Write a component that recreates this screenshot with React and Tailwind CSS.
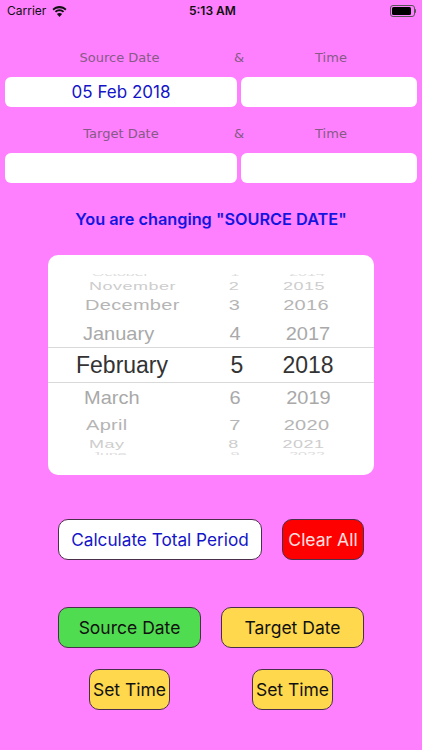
const rows = [
  { month: 'October', day: '1', year: '2014', h: 'h-[4px]', text: 'text-[#dcdcdc] text-[16px] scale-y-[0.4] -translate-y-[2px]', ml: 'ml-[44px]' },
  { month: 'November', day: '2', year: '2015', h: 'h-[17px]', text: 'text-[#cdcdcd] text-[18px] scale-y-[0.58] tracking-[0.5px]', ml: 'ml-[41px]', dayPad: 'pr-[2px]', yearPad: 'pr-[6px]' },
  { month: 'December', day: '3', year: '2016', h: 'h-[24px]', text: 'text-[#b5b5b5] text-[20px] scale-y-[0.74] tracking-[0.3px] -translate-y-[2px]', ml: 'ml-[37px]', dayPad: 'pr-[1px]', yearPad: 'pr-[2px]' },
  { month: 'January', day: '4', year: '2017', h: 'h-[28px]', text: 'text-[#a9a9a9] text-[20px] scale-y-[0.94]', ml: 'ml-[35px]', yearPad: 'pl-[2px]' },
  { month: 'February', day: '5', year: '2018', h: 'h-[36px]', text: 'text-[#333333] text-[23px]', ml: 'ml-[28px]', dayPad: 'pl-[4px]', yearPad: 'pl-[2px]', selected: true },
  { month: 'March', day: '6', year: '2019', h: 'h-[28px]', text: 'text-[#a9a9a9] text-[20px] scale-y-[0.94]', ml: 'ml-[36px]', yearPad: 'pl-[3px]' },
  { month: 'April', day: '7', year: '2020', h: 'h-[24px]', text: 'text-[#b5b5b5] text-[20px] scale-y-[0.74] tracking-[0.3px] translate-y-[2px]', ml: 'ml-[38px]', yearPad: 'pr-[1px]' },
  { month: 'May', day: '8', year: '2021', h: 'h-[17px]', text: 'text-[#cdcdcd] text-[18px] scale-y-[0.58] tracking-[0.5px] translate-y-[1px]', ml: 'ml-[41px]', dayPad: 'pr-[3px]', yearPad: 'pr-[7px]' },
  { month: 'June', day: '9', year: '2022', h: 'h-[6px]', text: 'text-[#dcdcdc] text-[16px] scale-y-[0.4]', ml: 'ml-[44px]' },
];

const Wifi = () => (
  <svg width="15" height="11" viewBox="0 0 15 11" fill="#111">
    <path d="M7.5 2.2c2.2 0 4.2.8 5.7 2.2l1.3-1.4C12.6 1.2 10.2 0 7.5 0S2.4 1.2.5 3l1.3 1.4c1.5-1.4 3.5-2.2 5.7-2.2z" />
    <path d="M7.5 5.3c1.3 0 2.5.5 3.4 1.3l1.3-1.4C11 4 9.300 3.200 7.500 3.200S4 4 2.800 5.200l1.300 1.400c.9-.8 2.100-1.300 3.400-1.300z" />
    <path d="M7.500 11 10.100 8.100C9.400 7.500 8.500 7.100 7.500 7.100S5.600 7.500 4.900 8.100z" />
  </svg>
);

const Battery = () => (
  <div className="flex items-center">
    <div className="w-[25px] h-[12px] rounded-[3px] border border-[#555] p-[1px]">
      <div className="w-[19px] h-full rounded-[1.5px] bg-black" />
    </div>
    <div className="w-[1.5px] h-[4px] bg-[#555] rounded-r-sm" />
  </div>
);

const LabelRow = ({ left, leftClass }) => (
  <div className="flex h-[20px] items-center pt-[1px] text-[13px] text-[#855a85] font-['DejaVu_Sans',sans-serif]">
    <div className={`w-[239px] text-center ${leftClass}`}>{left}</div>
    <div className="w-[0px] flex justify-center"><span>&amp;</span></div>
    <div className="flex-1 pl-[1px] text-center">Time</div>
  </div>
);

const InputRow = ({ value }) => (
  <div className="flex gap-[4px] px-[5px]">
    <div className="w-[232px] h-[30px] bg-white rounded-[6px] flex items-center justify-center pt-[2px] text-[17px] text-[#1414c8]">
      {value}
    </div>
    <div className="w-[176px] h-[30px] bg-white rounded-[6px]" />
  </div>
);

const ActionButton = ({ className, children }) => (
  <button className={`h-[41px] pt-[1px] rounded-[10px] border border-[#4a2f4a] flex items-center justify-center ${className}`}>
    {children}
  </button>
);

export default function App() {
  return (
    <div className="w-[422px] h-[750px] overflow-hidden bg-[#ff80ff] font-['Inter',sans-serif]">
      {/* status bar */}
      <div className="flex items-center justify-between h-[22px] pl-[7px] pr-[6px] text-[#111] text-[12px]">
        <div className="flex items-center gap-[6px]">
          <span>Carrier</span>
          <Wifi />
        </div>
        <span className="font-semibold absolute left-[189px]">5:13 AM</span>
        <Battery />
      </div>

      <div className="pt-[25px]">
        <LabelRow left="Source Date" leftClass="pl-[0px]" />
        <div className="h-[10px]" />
        <InputRow value="05 Feb 2018" />
        <div className="h-[16px]" />
        <LabelRow left="Target Date" leftClass="pl-[3px]" />
        <div className="h-[10px]" />
        <InputRow />
      </div>

      <div className="mt-[25px] h-[22px] flex items-center justify-center text-[16.3px] font-semibold text-[#1414e0]">
        You are changing "SOURCE DATE"
      </div>

      {/* date picker */}
      <div className="ml-[48px] mt-[25px] w-[326px] h-[220px] bg-white rounded-[10px] pt-[19px]">
        <div className="h-[181px] overflow-hidden">
          {rows.map((row) => (
            <div
              key={row.month}
              className={`flex items-center overflow-hidden font-['Liberation_Sans',sans-serif] ${row.h} ${row.selected ? 'border-y border-[#d9d9d9]' : ''}`}
            >
              <div className="w-[155px] shrink-0">
                <div className={`${row.ml} origin-left whitespace-nowrap ${row.text}`}>{row.month}</div>
              </div>
              <div className={`w-[64px] shrink-0 text-center ${row.dayPad || ''}`}>
                <div className={row.text}>{row.day}</div>
              </div>
              <div className={`w-[80px] shrink-0 text-center ${row.yearPad || ''}`}>
                <div className={row.text}>{row.year}</div>
              </div>
            </div>
          ))}
        </div>
      </div>

      {/* buttons */}
      <div className="mt-[44px] flex px-[58px] justify-between">
        <ActionButton className="w-[204px] bg-white text-[#1414c8] text-[17.2px]">Calculate Total Period</ActionButton>
        <ActionButton className="w-[82px] bg-[#ff0000] text-[#ffe0e0] text-[17.5px]">Clear All</ActionButton>
      </div>
      <div className="mt-[47px] flex px-[58px] justify-between">
        <ActionButton className="w-[143px] bg-[#4fdc50] text-[#111] text-[17.5px]">Source Date</ActionButton>
        <ActionButton className="w-[143px] bg-[#ffd84d] text-[#111] text-[17.5px]">Target Date</ActionButton>
      </div>
      <div className="mt-[21px] flex pl-[89px] gap-[82px]">
        <ActionButton className="w-[81px] bg-[#ffd84d] text-[#111] text-[17.5px]">Set Time</ActionButton>
        <ActionButton className="w-[81px] bg-[#ffd84d] text-[#111] text-[17.5px]">Set Time</ActionButton>
      </div>
    </div>
  );
}
